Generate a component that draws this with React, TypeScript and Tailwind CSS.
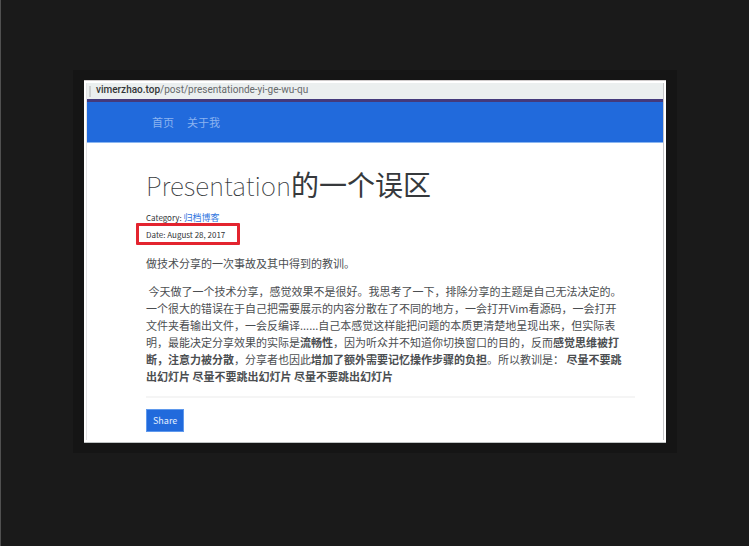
const sans = 'font-["Noto_Sans_CJK_SC",sans-serif]';

function AddressBar() {
  return (
    <div className="flex h-[16px] items-center bg-[#ebefef] pl-[2px] font-[Roboto] text-[10px] leading-[14px] text-[#66696b]">
      <span className="mr-[5px] h-[11px] w-[2px] bg-[#cdd0d1]" />
      <span className="pb-[3px]">
        <span className="font-medium text-[#333537]">vimerzhao.top</span>
        /post/presentationde-yi-ge-wu-qu
      </span>
    </div>
  );
}

function NavBar() {
  return (
    <nav className="flex h-[44px] items-center gap-[13px] border-t-[3px] border-b border-t-[#443a7c] border-b-[#8bb6f0] bg-[#216adc] pl-[65px] text-[11px] leading-[16px] text-[#8bb3f0]">
      <a href="#home">首页</a>
      <a href="#about">关于我</a>
    </nav>
  );
}

function Article() {
  return (
    <article className="pr-[28px] pl-[59px] text-[11px] leading-[17px] text-[#4b4e51]">
      <h1 className="pt-[21px] text-[28px] leading-[40px] text-[#36393c]">
        <span className="text-[26px] font-thin">Presentation</span>
        <span className="font-normal">的一个误区</span>
      </h1>
      <div className="pt-[4px] text-[8px] leading-[17px] text-[#303336]">
        <p>
          Category:{" "}
          <a href="#archive" className="text-[9px] text-[#2f75e0]">
            归档博客
          </a>
        </p>
        <p className="relative w-fit">
          Date: August 28, 2017
          <span className="absolute -top-[3px] -right-[15px] -bottom-[2px] -left-[10px] rounded-[1px] border-[3px] border-[#e3242f]" />
        </p>
      </div>
      <p className="mt-[12px]">做技术分享的一次事故及其中得到的教训。</p>
      <p className="mt-[11px] whitespace-nowrap">
        &nbsp;今天做了一个技术分享，感觉效果不是很好。我思考了一下，排除分享的主题是自己无法决定的。
        <br />
        一个很大的错误在于自己把需要展示的内容分散在了不同的地方，一会打开Vim看源码，一会打开
        <br />
        文件夹看输出文件，一会反编译......自己本感觉这样能把问题的本质更清楚地呈现出来，但实际表
        <br />
        明，最能决定分享效果的实际是<strong>流畅性</strong>，因为听众并不知道你切换窗口的目的，反而<strong>感觉思维被打</strong>
        <br />
        <strong>断，注意力被分散</strong>，分享者也因此<strong>增加了额外需要记忆操作步骤的负担</strong>。所以教训是：&nbsp;<strong>尽量不要跳</strong>
        <br />
        <strong>出幻灯片 尽量不要跳出幻灯片 尽量不要跳出幻灯片</strong>
      </p>
      <hr className="mt-[11px] border-t-2 border-[#f5f5f5]" />
      <button
        type="button"
        className="mt-[11px] block h-[23px] border border-[#5f99ed] bg-[#216adc] px-[6px] text-[9px] leading-[17px] text-[#e4efff]"
      >
        Share
      </button>
    </article>
  );
}

export default function App() {
  return (
    <div className={`${sans} min-h-screen border-l border-[#505050] bg-[#1a1a1a] pt-[70px] pr-[72px] pl-[72px]`}>
      <div className="bg-[#151515] px-[11px] py-[10px]">
        <main className="border-t border-b border-t-[#d0cccc] border-b-[#bfc3c3] bg-white px-[2px] pt-[2px] pb-[2px]">
          <div className="border-r border-l border-r-[#c6c6c8] border-l-[#e2e2e4] pb-[8px]">
            <AddressBar />
            <NavBar />
            <Article />
          </div>
        </main>
      </div>
    </div>
  );
}
